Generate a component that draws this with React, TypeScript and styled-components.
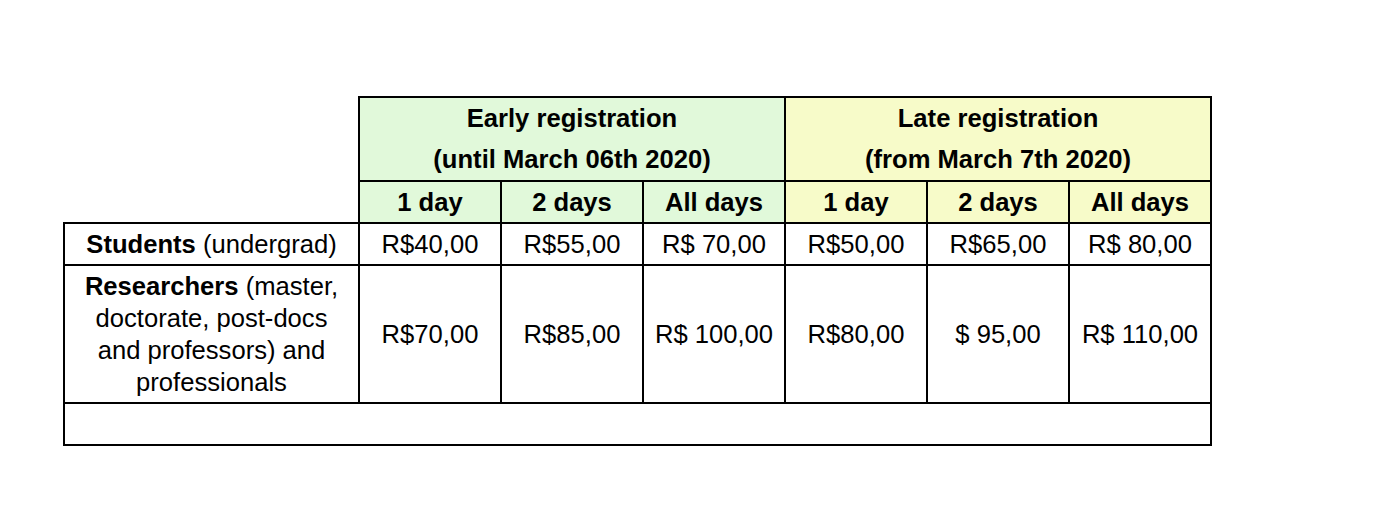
import React from "react";
import styled, { createGlobalStyle } from "styled-components";

const Global = createGlobalStyle`
  html, body { margin: 0; padding: 0; background: #ffffff; }
  body { font-family: "Liberation Sans", Arial, sans-serif; color: #000; }
`;

const Page = styled.div`
  padding: 96px 0 0 63px;
  width: 1380px;
  height: 512px;
  box-sizing: border-box;
`;

const Table = styled.table`
  border-collapse: collapse;
  table-layout: fixed;
  width: 1149px;
  font-size: 25.6px;
`;

const Cell = styled.td<{ $bg?: string; $bold?: boolean; $h?: number; $lh?: number; $blank?: boolean }>`
  border: ${(p) => (p.$blank ? "none" : "2px solid #000")};
  background: ${(p) => p.$bg ?? "transparent"};
  font-weight: ${(p) => (p.$bold ? 700 : 400)};
  height: ${(p) => p.$h ?? 40}px;
  line-height: ${(p) => p.$lh ?? 30}px;
  text-align: center;
  vertical-align: middle;
  padding: 0 1px;
  box-sizing: border-box;
  white-space: nowrap;
`;

const LabelCell = styled(Cell)`
  white-space: normal;
  padding: 0 10px;
`;

const EARLY = "#e1f9da";
const LATE = "#f7fbc9";

const prices = {
  students: ["R$40,00", "R$55,00", "R$ 70,00", "R$50,00", "R$65,00", "R$ 80,00"],
  researchers: ["R$70,00", "R$85,00", "R$ 100,00", "R$80,00", "$ 95,00", "R$ 110,00"],
};

const days = ["1 day", "2 days", "All days"];

export default function App() {
  return (
    <>
      <Global />
      <Page>
        <Table>
          <colgroup>
            <col style={{ width: 295 }} />
            {Array.from({ length: 6 }).map((_, i) => (
              <col key={i} style={{ width: 142 }} />
            ))}
          </colgroup>
          <tbody>
            <tr>
              <Cell $blank $h={84} />
              <Cell colSpan={3} $bg={EARLY} $bold $h={84} $lh={41}>
                Early registration
                <br />
                (until March 06th 2020)
              </Cell>
              <Cell colSpan={3} $bg={LATE} $bold $h={84} $lh={41}>
                Late registration
                <br />
                (from March 7th 2020)
              </Cell>
            </tr>
            <tr>
              <Cell $blank $h={42} />
              {days.map((d) => (
                <Cell key={"e" + d} $bg={EARLY} $bold $h={42}>
                  {d}
                </Cell>
              ))}
              {days.map((d) => (
                <Cell key={"l" + d} $bg={LATE} $bold $h={42}>
                  {d}
                </Cell>
              ))}
            </tr>
            <tr>
              <LabelCell $h={42}>
                <b>Students</b> (undergrad)
              </LabelCell>
              {prices.students.map((p, i) => (
                <Cell key={i} $h={42}>
                  {p}
                </Cell>
              ))}
            </tr>
            <tr>
              <LabelCell $h={138} $lh={32}>
                <b>Researchers</b> (master, doctorate, post-docs and professors) and professionals
              </LabelCell>
              {prices.researchers.map((p, i) => (
                <Cell key={i} $h={138}>
                  {p}
                </Cell>
              ))}
            </tr>
            <tr>
              <Cell colSpan={7} $h={42} />
            </tr>
          </tbody>
        </Table>
      </Page>
    </>
  );
}
